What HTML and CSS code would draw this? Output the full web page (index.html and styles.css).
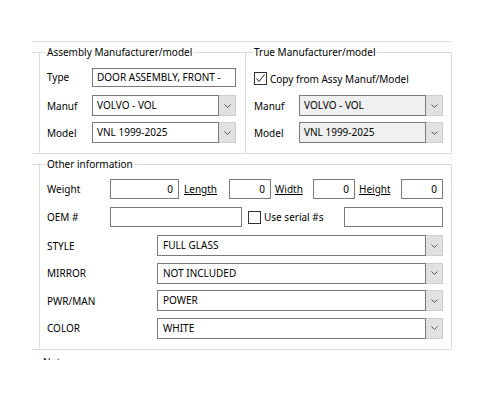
FILE: index.html
```html
<!DOCTYPE html>
<html>
<head>
<meta charset="utf-8">
<title>Part details</title>
<link rel="stylesheet" href="styles.css">
</head>
<body>
<div class="page">
  <div class="topline"></div>
  <div class="row1">
    <div class="group g-assy ext">
      <span class="legend">Assembly Manufacturer/model</span>
      <div class="form-grid">
        <span class="lbl lbl-tb">Type</span>
        <div class="textbox">DOOR ASSEMBLY, FRONT -</div>
        <span class="lbl">Manuf</span>
        <div class="combo"><span class="combo-text">VOLVO - VOL</span><span class="combo-btn"><svg width="7" height="4" viewBox="0 0 7 4"><polyline points="0.5,0.5 3.5,3.5 6.5,0.5" fill="none" stroke="#555" stroke-width="1"/></svg></span></div>
        <span class="lbl">Model</span>
        <div class="combo"><span class="combo-text">VNL 1999-2025</span><span class="combo-btn"><svg width="7" height="4" viewBox="0 0 7 4"><polyline points="0.5,0.5 3.5,3.5 6.5,0.5" fill="none" stroke="#555" stroke-width="1"/></svg></span></div>
      </div>
    </div>
    <div class="group g-true">
      <span class="legend">True Manufacturer/model</span>
      <div class="form-grid">
        <div class="checkrow">
          <span class="checkbox"><svg width="11" height="11" viewBox="0 0 11 11"><polyline points="1.5,5.5 4,8.5 9.5,1.5" fill="none" stroke="#222" stroke-width="1"/></svg></span>
          <span>Copy from Assy Manuf/Model</span>
        </div>
        <span class="lbl">Manuf</span>
        <div class="combo disabled"><span class="combo-text">VOLVO - VOL</span><span class="combo-btn"><svg width="7" height="4" viewBox="0 0 7 4"><polyline points="0.5,0.5 3.5,3.5 6.5,0.5" fill="none" stroke="#555" stroke-width="1"/></svg></span></div>
        <span class="lbl">Model</span>
        <div class="combo disabled"><span class="combo-text">VNL 1999-2025</span><span class="combo-btn"><svg width="7" height="4" viewBox="0 0 7 4"><polyline points="0.5,0.5 3.5,3.5 6.5,0.5" fill="none" stroke="#555" stroke-width="1"/></svg></span></div>
      </div>
    </div>
  </div>
  <div class="group g-other ext">
    <span class="legend">Other information</span>
    <div class="dims">
      <span class="lbl-w">Weight</span>
      <div class="num w69">0</div>
      <span class="dl dl-len"><u>Length</u></span>
      <div class="num w42">0</div>
      <span class="dl dl-wid"><u>Width</u></span>
      <div class="num w42">0</div>
      <span class="dl dl-hei"><u>Height</u></span>
      <div class="num w42">0</div>
    </div>
    <div class="dims oem">
      <span class="lbl-w">OEM #</span>
      <div class="num w132"></div>
      <span class="checkbox cb-serial"></span>
      <span class="serial-label">Use serial #s</span>
      <div class="num w99"></div>
    </div>
    <div class="list">
      <span>STYLE</span>
      <div class="combo"><span class="combo-text">FULL GLASS</span><span class="combo-btn"><svg width="7" height="4" viewBox="0 0 7 4"><polyline points="0.5,0.5 3.5,3.5 6.5,0.5" fill="none" stroke="#555" stroke-width="1"/></svg></span></div>
      <span>MIRROR</span>
      <div class="combo"><span class="combo-text">NOT INCLUDED</span><span class="combo-btn"><svg width="7" height="4" viewBox="0 0 7 4"><polyline points="0.5,0.5 3.5,3.5 6.5,0.5" fill="none" stroke="#555" stroke-width="1"/></svg></span></div>
      <span>PWR/MAN</span>
      <div class="combo"><span class="combo-text">POWER</span><span class="combo-btn"><svg width="7" height="4" viewBox="0 0 7 4"><polyline points="0.5,0.5 3.5,3.5 6.5,0.5" fill="none" stroke="#555" stroke-width="1"/></svg></span></div>
      <span>COLOR</span>
      <div class="combo"><span class="combo-text">WHITE</span><span class="combo-btn"><svg width="7" height="4" viewBox="0 0 7 4"><polyline points="0.5,0.5 3.5,3.5 6.5,0.5" fill="none" stroke="#555" stroke-width="1"/></svg></span></div>
    </div>
  </div>
  <div class="notes">Notes</div>
</div>
</body>
</html>
```
FILE: styles.css
```css
* { box-sizing: border-box; }
body {
  margin: 0;
  background: #fff;
  font-family: "Noto Sans", "Open Sans", sans-serif;
  font-size: 10px;
  color: #000;
}
.page {
  width: 452px;
  height: 360px;
  overflow: hidden;
  padding: 41px 0 0 32px;
}
.topline { border-top: 1px solid #e3e3e3; }
.row1 {
  display: flex;
  margin-top: 10px;
  padding-left: 7px;
}
.group {
  position: relative;
  border: 1px solid #dcdcdc;
}
.legend {
  position: absolute;
  top: -8px;
  left: 6px;
  padding: 0 1px;
  background: #fff;
  line-height: 14px;
  white-space: nowrap;
}
.ext::before {
  content: "";
  position: absolute;
  left: -8px;
  top: -1px;
  bottom: -1px;
  width: 7px;
  border-top: 1px solid #dcdcdc;
  border-bottom: 1px solid #dcdcdc;
}
.g-assy {
  width: 207px;
  padding: 15px 9px 10px 7px;
}
.g-true {
  width: 206px;
  border-left: none;
  padding: 15px 8px 10px 8px;
}
.g-true .legend { left: 7px; }
.form-grid {
  display: grid;
  grid-template-columns: 45px 144px;
  grid-auto-rows: 21px;
  row-gap: 6px;
  align-items: center;
}
.lbl { white-space: nowrap; }
.lbl-tb { align-self: start; line-height: 19px; }
.textbox {
  align-self: start;
  height: 19px;
  border: 1px solid #7a7a7a;
  padding: 0 4px;
  line-height: 17px;
  white-space: nowrap;
  overflow: hidden;
}
.combo {
  display: flex;
  height: 21px;
}
.combo-text {
  flex: 1;
  border: 1px solid #7a7a7a;
  padding: 0 4px;
  line-height: 19px;
  background: #fff;
  white-space: nowrap;
}
.combo.disabled .combo-text { background: #f0f0f0; }
.combo-btn {
  width: 17px;
  border: 1px solid #cdcdcd;
  border-left: none;
  background: #e1e1e1;
  display: flex;
  align-items: center;
  justify-content: center;
}
.checkrow {
  grid-column: 1 / -1;
  display: flex;
  align-items: center;
  gap: 3px;
}
.checkbox {
  width: 13px;
  height: 13px;
  border: 1px solid #333;
  background: #fff;
  display: flex;
  flex: none;
}
.g-other {
  margin-top: 10px;
  margin-left: 7px;
  width: 413px;
  padding: 14px 8px 10.5px 7px;
}
.dims {
  display: flex;
  height: 20px;
  align-items: center;
}
.dims.oem { margin-top: 8px; }
.lbl-w { width: 63px; flex: none; }
.num {
  height: 20px;
  border: 1px solid #7a7a7a;
  text-align: right;
  padding-right: 5px;
  line-height: 18px;
  flex: none;
}
.w69 { width: 69px; }
.w42 { width: 42px; }
.w132 { width: 132px; }
.w99 { width: 99px; }
.dl { flex: none; }
.dl-len { width: 50px; padding-left: 5px; }
.dl-wid { width: 42px; padding-left: 4px; }
.dl-hei { width: 46px; padding-left: 4px; }
.cb-serial { margin-left: 6px; }
.serial-label { flex: 1; padding-left: 3px; white-space: nowrap; }
.list {
  display: grid;
  grid-template-columns: 110px 286px;
  grid-auto-rows: 21px;
  row-gap: 6.5px;
  margin-top: 8px;
  align-items: center;
}
.list .combo-text { padding-left: 5px; }
.notes {
  margin-top: 5px;
  padding-left: 11px;
  line-height: 14px;
}
```
